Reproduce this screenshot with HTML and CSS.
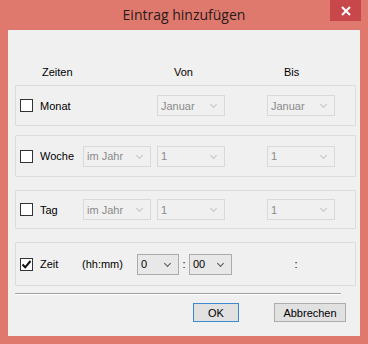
FILE: index.html
```html
<!DOCTYPE html>
<html lang="de">
<head>
  <meta charset="UTF-8">
  <title>Eintrag hinzufügen</title>
  <link rel="stylesheet" href="styles.css">
</head>
<body>
  <div class="window">
    <div class="titlebar">
      <span class="title">Eintrag hinzufügen</span>
      <div class="close">
        <svg width="10" height="10" viewBox="0 0 10 10"><path d="M1 1L9 9M9 1L1 9" stroke="#fff" stroke-width="2"/></svg>
      </div>
    </div>

    <div class="client">
      <div class="header">
        <span class="h-zeiten">Zeiten</span>
        <span class="h-von">Von</span>
        <span class="h-bis">Bis</span>
      </div>

      <div class="group g1">
        <span class="check"></span>
        <span class="label">Monat</span>
        <span class="slot"></span>
        <div class="sel sel-b"><span>Januar</span><i class="arrow"></i></div>
        <div class="sel sel-c"><span>Januar</span><i class="arrow"></i></div>
      </div>

      <div class="group g2">
        <span class="check"></span>
        <span class="label">Woche</span>
        <div class="sel"><span>im Jahr</span><i class="arrow"></i></div>
        <div class="sel sel-b"><span>1</span><i class="arrow"></i></div>
        <div class="sel sel-c"><span>1</span><i class="arrow"></i></div>
      </div>

      <div class="group g3">
        <span class="check"></span>
        <span class="label">Tag</span>
        <div class="sel"><span>im Jahr</span><i class="arrow"></i></div>
        <div class="sel sel-b"><span>1</span><i class="arrow"></i></div>
        <div class="sel sel-c"><span>1</span><i class="arrow"></i></div>
      </div>

      <div class="group g4">
        <span class="check checked">
          <svg width="11" height="11" viewBox="0 0 11 11"><path d="M1.5 5.5L4.2 8.3L9.5 2" fill="none" stroke="#111" stroke-width="2"/></svg>
        </span>
        <span class="label label-zeit">Zeit</span>
        <span class="hint">(hh:mm)</span>
        <div class="sel sel-on sel-hour"><span>0</span><i class="arrow"></i></div>
        <span class="colon">:</span>
        <div class="sel sel-on sel-min"><span>00</span><i class="arrow"></i></div>
        <span class="colon colon-end">:</span>
      </div>

      <div class="separator"></div>

      <div class="buttons">
        <button class="btn btn-default">OK</button>
        <button class="btn">Abbrechen</button>
      </div>
    </div>
  </div>
</body>
</html>
```

FILE: styles.css
```css
html, body {
  margin: 0;
  padding: 0;
}
body {
  font-family: "Liberation Sans", Arial, sans-serif;
  font-size: 11px;
  color: #000;
  background-color: #df796d;
}
.window {
  width: 368px;
  height: 344px;
  background-color: #df796d;
  display: flex;
  flex-direction: column;
}
.titlebar {
  position: relative;
  height: 30px;
  display: flex;
  align-items: center;
  justify-content: center;
}
.title {
  font-family: "Open Sans", "Noto Sans", sans-serif;
  font-size: 14px;
  color: #2a1a1a;
  margin-top: -1px;
}
.close {
  position: absolute;
  top: 0;
  left: 330px;
  width: 31px;
  height: 21px;
  background-color: #c8474a;
  display: flex;
  align-items: center;
  justify-content: center;
}
.client {
  margin: 0 8px 8px 8px;
  height: 306px;
  background-color: #f0f0f0;
  box-sizing: border-box;
}
.header {
  position: relative;
  margin-top: 36px;
  height: 13px;
  line-height: 13px;
}
.header span {
  position: absolute;
  top: 0;
}
.h-zeiten { left: 34px; }
.h-von { left: 166px; }
.h-bis { left: 276px; }

.group {
  margin-left: 7px;
  width: 341px;
  box-sizing: border-box;
  border: 1px solid #dcdcdc;
  border-radius: 1px;
  display: flex;
  align-items: center;
  padding-left: 4px;
}
.g1 { margin-top: 6px; height: 41px; }
.g2 { margin-top: 9px; height: 42px; }
.g3 { margin-top: 13px; height: 39px; }
.g4 { margin-top: 13px; height: 44px; }

.check {
  width: 13px;
  height: 13px;
  box-sizing: border-box;
  border: 1px solid #333;
  background-color: #fff;
  margin-right: 7px;
  display: flex;
  align-items: center;
  justify-content: center;
}
.label {
  width: 43px;
}
.slot {
  width: 68px;
}
.sel {
  position: relative;
  width: 68px;
  height: 21px;
  box-sizing: border-box;
  border: 1px solid #d9d9d9;
  background-color: #f0f0f0;
  color: #8a8a8a;
  display: flex;
  align-items: center;
  padding-left: 3px;
}
.sel-b { margin-left: 6px; }
.sel-c { margin-left: 42px; }
.arrow {
  position: absolute;
  right: 8px;
  top: 6px;
  width: 4px;
  height: 4px;
  border-right: 1.5px solid #c4c4c4;
  border-bottom: 1.5px solid #c4c4c4;
  transform: rotate(45deg);
}
.sel-on {
  border-color: #acacac;
  background-color: #e8e8e8;
  color: #000;
}
.sel-on .arrow {
  border-color: #555;
}
.label-zeit {
  width: 42px;
}
.hint {
  width: 55px;
}
.sel-hour { width: 42px; }
.sel-min { width: 43px; }
.colon {
  width: 10px;
  text-align: center;
}
.colon-end {
  margin-left: 59px;
}
.separator {
  margin: 7px 0 0 7px;
  width: 326px;
  height: 1px;
  background-color: #a0a0a0;
  border-bottom: 1px solid #fff;
}
.buttons {
  margin-top: 8px;
  display: flex;
  justify-content: flex-end;
  gap: 35px;
  padding-right: 14px;
}
.btn {
  font-family: "Liberation Sans", Arial, sans-serif;
  font-size: 11px;
  height: 19px;
  padding: 0;
  border: 1px solid #adadad;
  background-color: #e1e1e1;
  color: #000;
  width: 72px;
}
.btn-default {
  width: 46px;
  border-color: #3c8ad0;
}
```
